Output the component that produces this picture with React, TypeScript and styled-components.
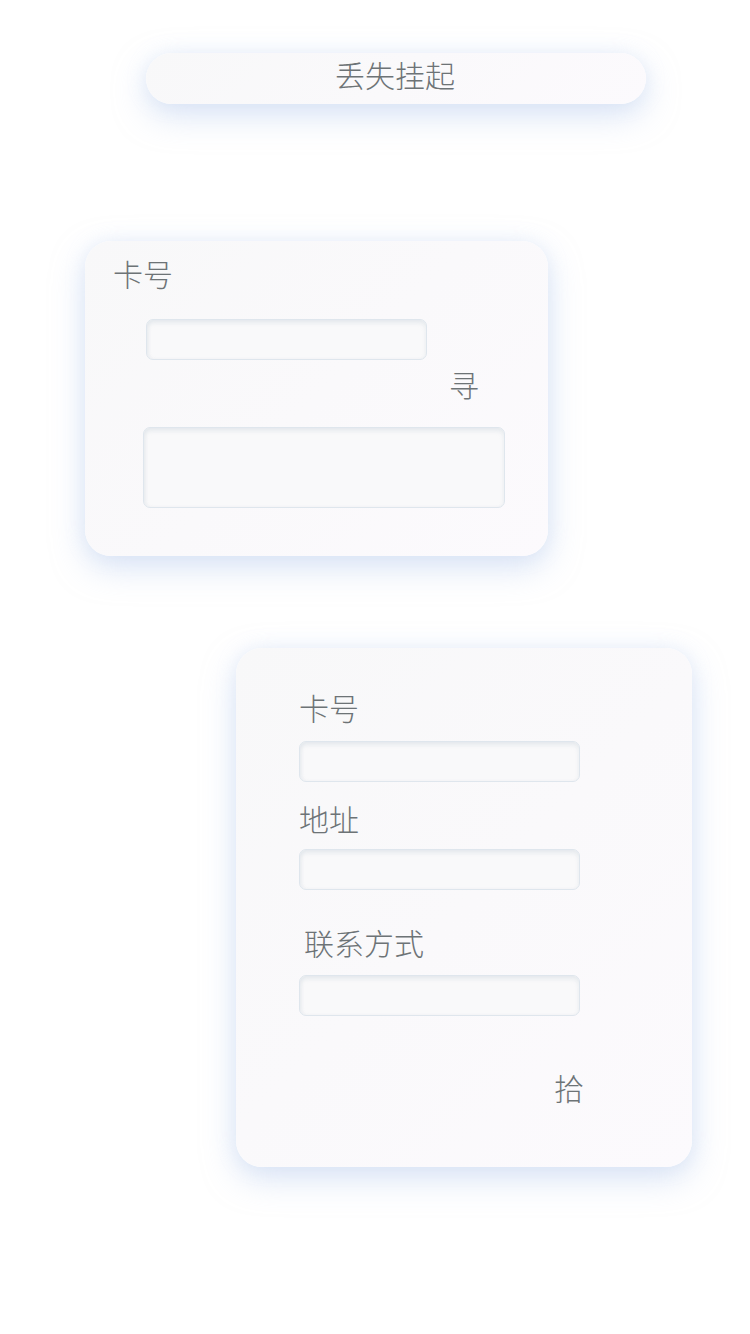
import styled, { createGlobalStyle } from "styled-components";

const GlobalStyle = createGlobalStyle`
	html, body {
		margin: 0;
		padding: 0;
		background: #ffffff;
	}
	body {
		font-family: "Noto Sans CJK SC", "Noto Sans", sans-serif;
		font-weight: 300;
		color: #6d7376;
	}
`;

const Page = styled.div`
	display: flex;
	flex-direction: column;
	align-items: flex-start;
	width: 750px;
	min-height: 1334px;
	padding-top: 53px;
	box-sizing: border-box;
`;

const surface = `
	background: linear-gradient(135deg, #f8f8f9 0%, #fcfafd 100%);
	box-shadow: 0 12px 32px rgba(184, 204, 238, 0.5), 0 0 18px rgba(214, 226, 246, 0.35);
`;

const Pill = styled.div`
	${surface}
	margin-left: 146px;
	width: 500px;
	height: 51px;
	border-radius: 26px;
	display: flex;
	align-items: center;
	justify-content: center;
	font-size: 30px;
	line-height: 1;
	padding: 0 2px 9px 0;
	box-sizing: border-box;
`;

const Card = styled.div<{ $left: number; $top: number; $width: number; $height: number }>`
	${surface}
	margin-left: ${(p) => p.$left}px;
	margin-top: ${(p) => p.$top}px;
	width: ${(p) => p.$width}px;
	height: ${(p) => p.$height}px;
	border-radius: 26px;
	box-sizing: border-box;
	display: flex;
	flex-direction: column;
	align-items: flex-start;
`;

const Label = styled.div<{ $left?: number; $top?: number }>`
	font-size: 30px;
	line-height: 30px;
	margin-left: ${(p) => p.$left ?? 0}px;
	margin-top: ${(p) => p.$top ?? 0}px;
`;

const Field = styled.div<{ $left?: number; $top?: number; $width: number; $height: number }>`
	margin-left: ${(p) => p.$left ?? 0}px;
	margin-top: ${(p) => p.$top ?? 0}px;
	width: ${(p) => p.$width}px;
	height: ${(p) => p.$height}px;
	box-sizing: border-box;
	background: #f9f9fa;
	border: 1px solid #dfe6ed;
	border-radius: 7px;
	box-shadow: inset 0 3px 4px rgba(208, 217, 223, 0.45), inset 2px 0 3px rgba(218, 225, 231, 0.25);
`;

const Action = styled.div<{ $left: number; $top: number }>`
	font-size: 30px;
	line-height: 30px;
	margin-left: ${(p) => p.$left}px;
	margin-top: ${(p) => p.$top}px;
`;

export default function App() {
	return (
		<>
			<GlobalStyle />
			<Page>
				<Pill>丢失挂起</Pill>

				<Card $left={85} $top={137} $width={463} $height={315}>
					<Label $left={28} $top={17}>卡号</Label>
					<Field $left={61} $top={31} $width={281} $height={41} />
					<Action $left={364} $top={9}>寻</Action>
					<Field $left={58} $top={28} $width={362} $height={81} />
				</Card>

				<Card $left={236} $top={92} $width={456} $height={519}>
					<Label $left={63} $top={44}>卡号</Label>
					<Field $left={63} $top={19} $width={281} $height={41} />
					<Label $left={63} $top={21}>地址</Label>
					<Field $left={63} $top={16} $width={281} $height={41} />
					<Label $left={68} $top={37}>联系方式</Label>
					<Field $left={63} $top={18} $width={281} $height={41} />
					<Action $left={318} $top={56}>拾</Action>
				</Card>
			</Page>
		</>
	);
}
